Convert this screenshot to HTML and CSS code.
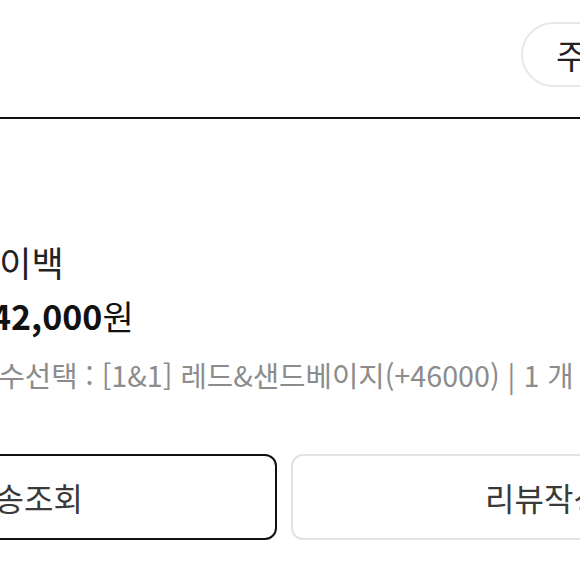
FILE: index.html
```html
<!DOCTYPE html>
<html lang="ko">
<head>
  <meta charset="UTF-8">
  <title>주문내역</title>
  <link rel="stylesheet" href="styles.css">
</head>
<body>
  <div class="page">
    <div class="order-head">
      <div class="order-date">2024.03.15</div>
      <button class="pill" type="button">주문상세보기</button>
    </div>

    <div class="product">
      <div class="thumb"></div>
      <div class="info">
        <div class="name">데이백</div>
        <div class="price"><strong>42,000</strong>원</div>
        <div class="option">필수선택 : [1&amp;1] 레드&amp;샌드베이지(+46000) | 1 개</div>
      </div>
    </div>

    <div class="actions">
      <button class="btn btn-dark" type="button">배송조회</button>
      <button class="btn" type="button">리뷰작성</button>
    </div>
  </div>
</body>
</html>
```

FILE: styles.css
```css
html, body {
  margin: 0;
  overflow: hidden;
  background-color: #fff;
}

body {
  font-family: "Noto Sans CJK KR", "Noto Sans", sans-serif;
  color: #222;
}

.page {
  width: 1026px;
  margin-left: -229px;
}

button {
  font-family: inherit;
  background: #fff;
  cursor: pointer;
}

.order-head {
  display: flex;
  justify-content: space-between;
  align-items: flex-start;
  height: 119px;
  padding-top: 22px;
  box-sizing: border-box;
  border-bottom: 2px solid #111;
}

.order-date {
  font-size: 30px;
  font-weight: bold;
  line-height: 65px;
}

.pill {
  flex: none;
  width: 276px;
  height: 65px;
  padding: 0 0 0 33px;
  text-align: left;
  white-space: nowrap;
  font-size: 34px;
  line-height: 1;
  color: #222;
  border: 2px solid #e8e8e8;
  border-radius: 33px;
}

.product {
  display: flex;
  gap: 21px;
  align-items: flex-start;
  padding-top: 121px;
}

.thumb {
  width: 180px;
  height: 180px;
  flex: none;
  background-color: #eee;
  border-radius: 8px;
}

.name {
  margin-left: -5px;
  font-size: 35px;
  line-height: 44px;
  color: #222;
}

.price {
  margin-top: 10px;
  margin-left: 19px;
  font-size: 34px;
  line-height: 44px;
  color: #111;
}

.price strong {
  font-weight: bold;
}

.option {
  margin-top: 17px;
  font-size: 28.7px;
  line-height: 40px;
  color: #8c8c8c;
  white-space: nowrap;
}

.actions {
  display: flex;
  gap: 14px;
  margin-top: 34px;
}

.btn {
  flex: 1;
  height: 86px;
  font-size: 32px;
  color: #3a3a3a;
  border: 2px solid #e2e2e2;
  border-radius: 12px;
}

.btn-dark {
  border-color: #111;
}
```
